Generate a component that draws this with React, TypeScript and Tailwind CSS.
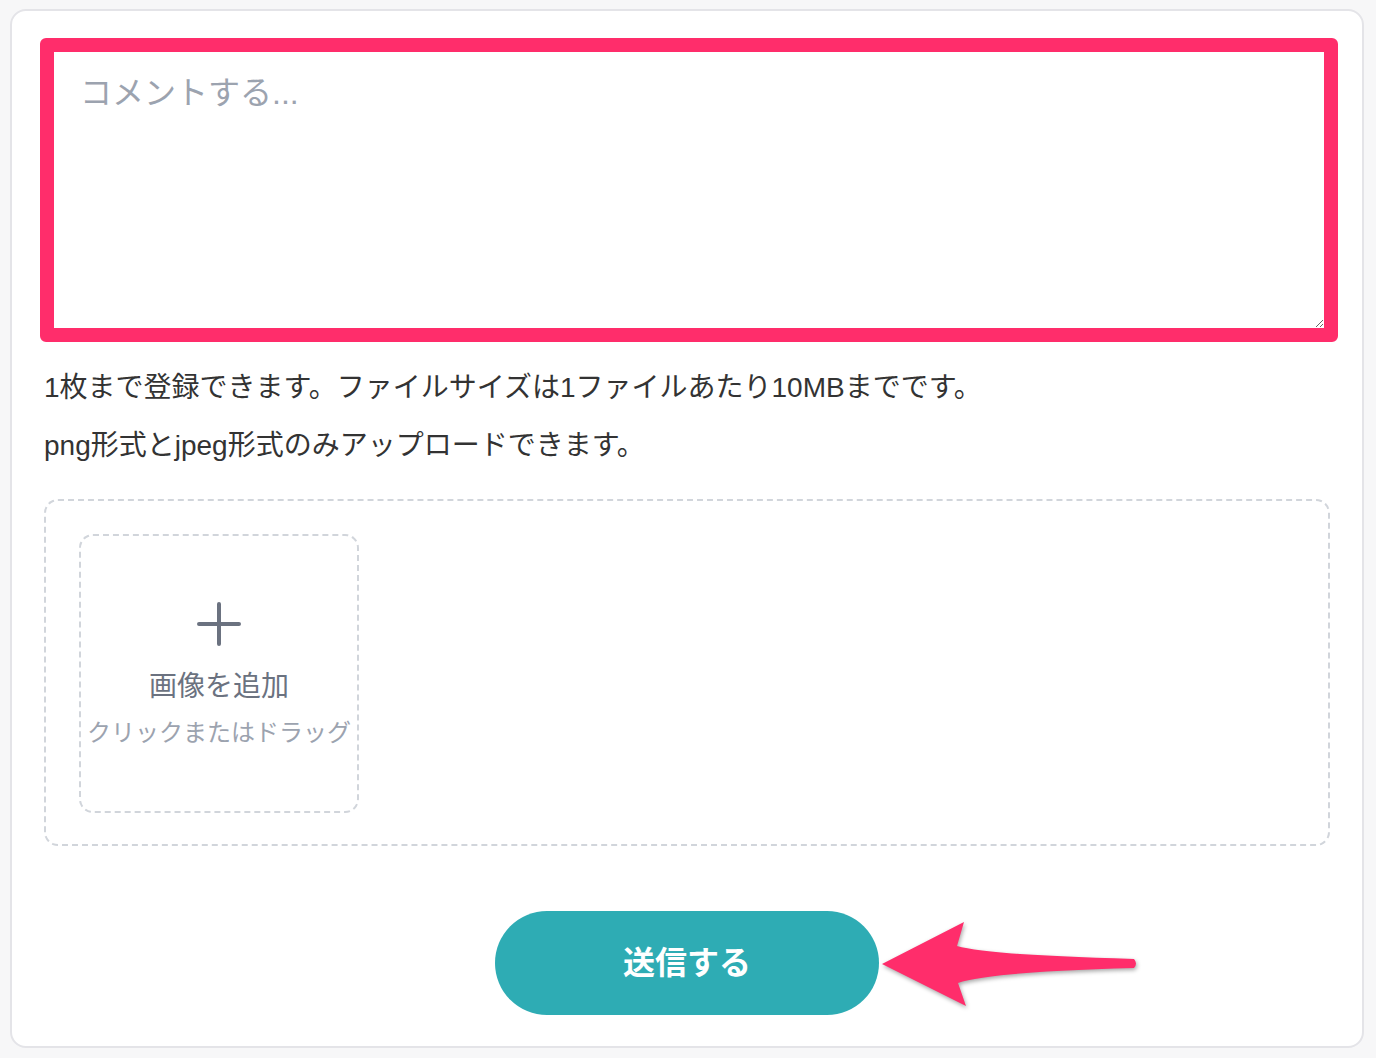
import React from 'react';

const font = { fontFamily: '"Liberation Sans", "Noto Sans CJK JP", sans-serif' };

const PlusIcon: React.FC = () => (
  <svg width="44" height="44" viewBox="0 0 44 44" fill="none">
    <path d="M22 2v40M2 22h40" stroke="#6b7280" strokeWidth="4" strokeLinecap="round" />
  </svg>
);

const PinkArrow: React.FC = () => (
  <svg
    width="265"
    height="100"
    viewBox="0 0 265 100"
    className="absolute left-[383px] top-[4px] drop-shadow-[1px_2px_2px_rgba(0,0,0,0.35)]"
  >
    <path
      d="M4 49 L86 7 L79 31 Q110 40 256 44 Q260 48.5 256 53 Q110 57 80 68 L88 91 Z"
      fill="#ff2d6b"
    />
  </svg>
);

export default function App() {
  return (
    <div className="min-h-screen bg-[#f7f7f8] pt-[9px] pl-[10px] pr-[12px]" style={font}>
      <div className="w-[1354px] h-[1039px] bg-white border-2 border-[#e4e4e8] rounded-[16px] px-[32px] pt-[27px] pb-[31px] flex flex-col">
        <div className="ml-[-4px] mr-[-8px]">
          <textarea
            placeholder="コメントする..."
            className="block w-full h-[304px] border-[14px] border-[#ff2d6b] rounded-[6px] px-[26px] pt-[17px] text-[32px] leading-[1.5] text-[#333] placeholder:text-[#9ca3af] outline-none"
            style={font}
          />
        </div>

        <p className="mt-[25px] text-[28px] leading-[42px] text-[#333]">
          1枚まで登録できます。ファイルサイズは1ファイルあたり10MBまでです。
        </p>
        <p className="mt-[16px] text-[28px] leading-[42px] text-[#333]">
          png形式とjpeg形式のみアップロードできます。
        </p>

        <div className="mt-[32px] h-[347px] border-2 border-dashed border-[#d1d5db] rounded-[14px] p-[33px]">
          <div className="w-[280px] h-[279px] border-2 border-dashed border-[#d1d5db] rounded-[14px] flex flex-col items-center pt-[66px] cursor-pointer">
            <PlusIcon />
            <div className="mt-[20px] text-[28px] leading-[42px] text-[#6b7280]">画像を追加</div>
            <div className="mt-[7px] text-[24px] leading-[36px] text-[#9ca3af] whitespace-nowrap">
              クリックまたはドラッグ
            </div>
          </div>
        </div>

        <div className="mt-[65px] flex justify-center">
          <div className="relative">
            <button className="w-[384px] h-[104px] rounded-full bg-[#2eacb4] text-white text-[32px] font-bold">
              送信する
            </button>
            <PinkArrow />
          </div>
        </div>
      </div>
    </div>
  );
}
